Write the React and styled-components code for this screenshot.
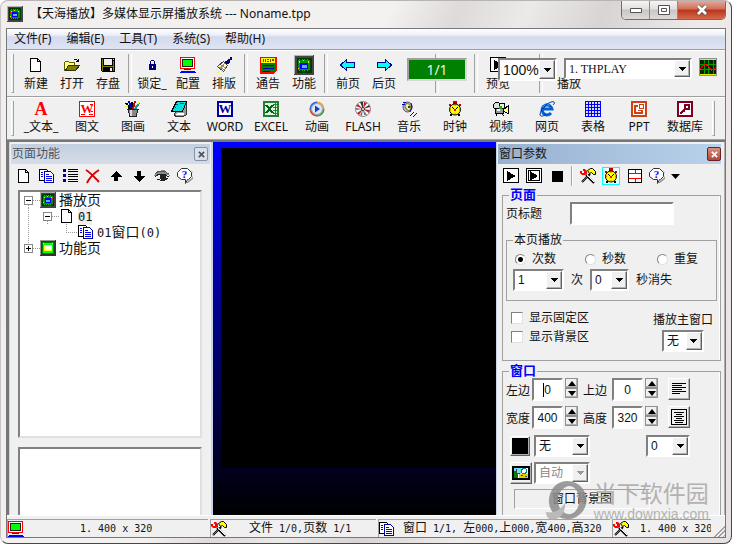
import React from 'react';
import styled, { createGlobalStyle, css } from 'styled-components';

const colors = {
  FACE: '#f0f0f0',
  SHADOW: '#808080',
  SOFT: '#a0a0a0',
  LIGHT: '#ffffff',
  TEXT: '#111111',
  BLUE: '#0000ff',
};

const fonts = {
  UI: '"Noto Sans", "Noto Sans CJK SC", sans-serif',
  DIALOG: '"Liberation Sans", "Noto Sans CJK SC", sans-serif',
  MONO: '"DejaVu Sans Mono", "Noto Sans CJK SC", monospace',
};

const GlobalStyle = createGlobalStyle`
  * { box-sizing: border-box; }
  body {
    margin: 0;
    background: #ffffff;
    color: ${colors.TEXT};
    font: 12px/16px ${fonts.UI};
  }
  button, input, select {
    margin: 0;
    padding: 0;
    border: 0;
    border-radius: 0;
    background: none;
    color: inherit;
    font: inherit;
    outline: none;
  }
`;

const sunken = css`
  border: 2px solid;
  border-color: ${colors.SHADOW} ${colors.LIGHT} ${colors.LIGHT} ${colors.SHADOW};
`;

const raised = css`
  border: 1px solid;
  border-color: ${colors.LIGHT} #606060 #606060 ${colors.LIGHT};
  box-shadow: inset -1px -1px 0 #b0b0b0;
`;

/* ---------- icons ---------- */

const Svg = styled.svg`
  display: block;
  flex: none;
  overflow: visible;
`;

const letter = { fontFamily: 'Liberation Serif, serif', fontWeight: 'bold', textAnchor: 'middle' };

const glyphs = {
  chip: (
    <>
      <path fill="#444" d="M0 0h16v16H0z" />
      <path fill="#b4b4b4" d="M0 0h15v1H1v14H0z" />
      <path fill="#003800" d="M2 2h12v12H2z" />
      <path fill="#009800" d="M3 4h10v8H3z" />
      <path fill="#00d000" d="M4 3h1v1H4zM6 3h1v1H6zM8 3h1v1H8zM10 3h1v1h-1zM4 12h1v1H4zM6 12h1v1H6zM8 12h1v1H8zM10 12h1v1h-1z" />
      <path fill="#0000ff" d="M5 6h6v5H5z" />
      <path fill="#ffe000" d="M4 5h1v1H4zM7 4h1v1H7zM11 5h1v1h-1zM3 10h1v1H3z" />
      <path fill="#ff2000" d="M3 6h1v1H3zM12 6h1v1h-1z" />
      <path fill="#60b0ff" d="M6 8h4v2H6z" />
    </>
  ),
  chipGreen: (
    <>
      <path fill="#333" d="M0 0h16v16H0z" />
      <path fill="#999" d="M0 0h15v1H1v14H0z" />
      <path fill="#008000" d="M2 2h12v12H2z" />
      <path fill="#00ff00" d="M3 3h10v10H3z" />
      <path fill="#ffff00" d="M3 3h1v1H3zM12 3h1v1h-1zM4 5h8v6H4z" />
      <path fill="#fff" d="M5 6h6v4H5z" />
    </>
  ),
  page: (
    <>
      <path fill="#fff" d="M3 2h7l3 3v9H3z" />
      <path fill="none" stroke="#000" d="M2.500 1.500h7l3 3v10h-10zM9.500 1.500v3h3" />
    </>
  ),
  open: (
    <>
      <path fill="#ffff80" d="M1 6l1-1h3l1 1h5v3H5l-3 5H1z" />
      <path fill="none" stroke="#606000" d="M.5 13.500v-8l1-1h3l1 1h5v3" />
      <path fill="#808000" stroke="#303000" d="M1.500 13.500l3-5h11l-4 5z" />
      <path fill="none" stroke="#000" d="M9.500 3.500l1-1h2l2 2M14.500 1.500v3h-3" />
    </>
  ),
  save: (
    <>
      <path fill="#000" d="M1 1h14v14H2l-1-1z" />
      <path fill="#808000" d="M2 2h1v12H2zM13 4h1v10h-1zM3 9h10v1H3z" />
      <path fill="#eee" d="M4 2h8v6H4zM13 2h1v1h-1zM10 11h2v3h-2z" />
    </>
  ),
  lock: (
    <>
      <path fill="none" stroke="#000080" d="M6.500 7.500v-3l1-1h2l1 1v3" />
      <path fill="#000080" d="M5 7h7v6H5z" />
      <path fill="#fff" d="M8 9h1v2H8z" />
    </>
  ),
  monitor: (
    <>
      <path fill="#fff" stroke="#ff0000" d="M.5.5h14v11H.5z" />
      <path fill="#222" d="M2 2h11v8H2z" />
      <path fill="#00ff00" d="M3 3h9v6H3z" />
      <path fill="#0000ff" d="M4 12h7v1H4zM1 14h14v1H1zM0 15h16v1H0z" />
    </>
  ),
  brush: (
    <>
      <path fill="#fff8c0" stroke="#444" d="M1.500 9.500l6-5 4 4-4 6z" />
      <path stroke="#888" d="M3 10l6 3M5 8l5 3M4 12l5-6" />
      <path fill="#ffff00" d="M0 12h2v1H0zM2 14h2v1H2zM1 15h2v1H1zM5 13h1v2H5z" />
      <path fill="#000080" d="M9 4h2l1-2h2V0h2v3h-2v2l-2 2h-2z" />
    </>
  ),
  memo: (
    <>
      <path fill="#f00" d="M0 0h17v14l-4 3H0z" />
      <path fill="#008000" d="M1 6h14v8l-3 1H1z" />
      <path fill="#ff0" d="M1 1h14v5H1z" />
      <path fill="#804000" d="M3 2h1v3H3zM5 2h1v3H5zM7 2h2v1H7zM7 4h2v1H7zM10 2h1v3h-1zM12 2h2v2h-2z" />
      <path fill="#0000c0" d="M3 8h11v1H3zM3 11h11v1H3zM3 14h7v1H3z" />
    </>
  ),
  back: <path fill="#00ffff" stroke="#000090" d="M.5 8L6.500 2.500v3h8v5h-8v3z" />,
  forward: <path fill="#00ffff" stroke="#000090" d="M15.500 8L9.500 2.500v3h-8v5h8v3z" />,
  play: (
    <>
      <path fill="#fff" stroke="#000" d="M.5.5h15v14H.5z" />
      <path fill="#000" d="M4 3l9 5-9 5z" />
    </>
  ),
  playDouble: (
    <>
      <path fill="#fff" stroke="#000" d="M.5.5h15v14H.5zM2.500 2.500h11v10h-11z" />
      <path fill="#000" d="M4 3l8 5-8 5z" />
    </>
  ),
  stop: <path fill="#000" d="M3 3h11v11H3z" />,
  scope: (
    <>
      <path fill="#909090" d="M0 0h16v16H0z" />
      <path fill="#002800" d="M1 1h14v14H1z" />
      <path fill="#e8e800" d="M1 1h14v1H1zM1 14h14v1H1z" />
      <path stroke="#00a000" d="M4.500 2v12M8.500 2v12M12.500 2v12M1 5.500h14M1 10.500h14" />
      <path fill="none" stroke="#ff0000" d="M1 10l2-3 2-2 3 2 3 4 2-1 2-2" />
    </>
  ),
  letterA: <text x="8" y="14" fontSize="18" fill="#f00" {...letter}>A</text>,
  wordRed: (
    <>
      <path fill="#fff" stroke="#f00" d="M.5.5h15v15H.5z" />
      <path stroke="#f00" d="M11 3.500h3M12 10.500h2M10 13.500h4M2 13.500h4" />
      <text x="8" y="12" fontSize="13" fill="#f00" {...letter}>W</text>
    </>
  ),
  paint: (
    <>
      <path fill="#888" stroke="#222" d="M3.500 8.500h9l-1 7h-7z" />
      <path fill="#ddd" d="M5 9h2v6H5z" />
      <path stroke="#000" strokeWidth="2" d="M1 2l4 6M7 1v7" />
      <path stroke="#d00000" strokeWidth="2" d="M10 0L8 8" />
      <path stroke="#0000d0" strokeWidth="2" d="M4 0l2 7" />
      <path stroke="#00a0a0" strokeWidth="2" d="M14 2l-4 6" />
      <path fill="#ff0" d="M12 1h2v2h-2zM1 4h2v2H1z" />
      <path stroke="#222" d="M2 8.500h12" />
    </>
  ),
  notebook: (
    <>
      <path fill="#999" stroke="#333" d="M6.500 3.500l9-2v12l-3 2h-8l-1-2z" />
      <path fill="#fff" d="M6 12h7v2H5z" />
      <path fill="#00e0e0" stroke="#000" d="M5.500.5h10l-4 10H.5z" />
      <path stroke="#006070" d="M5 3.500h2M4 6.500h1M9 2.500h4" />
    </>
  ),
  wordBlue: (
    <>
      <path fill="#0000a0" d="M0 0h16v16H0z" />
      <path fill="#fff" d="M2 2h12v12H2z" />
      <text x="8" y="12" fontSize="13" fill="#0000a0" {...letter}>W</text>
    </>
  ),
  excel: (
    <>
      <path fill="#dff0df" stroke="#208030" strokeWidth="2" d="M1 1h14v14H1z" />
      <path stroke="#208030" d="M10 3.500h4M10 6.500h4M10 9.500h4M10 12.500h4M12.500 2v12" />
      <path stroke="#006020" strokeWidth="2" d="M3 4l7 8M10 4l-7 8" />
    </>
  ),
  media: (
    <>
      <circle cx="8" cy="8" r="7.500" fill="#f2a030" />
      <path fill="#3070e0" d="M8 .5A7.500 7.500 0 0 0 .5 8H8z" />
      <path fill="#40a040" d="M8 15.500A7.500 7.500 0 0 0 15.500 8H8z" />
      <path fill="#d05030" d="M.5 8A7.500 7.500 0 0 0 8 15.500V8z" />
      <circle cx="8" cy="8" r="5.500" fill="#dce8fa" stroke="#9ab" />
      <path fill="#1040c0" d="M6 4.500l5 3.500-5 3.500z" />
    </>
  ),
  flash: (
    <>
      <circle cx="8" cy="8" r="7.500" fill="#fff" stroke="#888" />
      <path fill="#333" d="M8 8L5 1h3zM8 8l6-4 1 2z" />
      <path fill="#c02030" d="M8 8L9 1l3 1zM8 8l7 1-1 3zM8 8L1 5l2-2zM8 8l-6 4 2 2z" />
      <path fill="#777" d="M8 8l4 6H9zM8 8l-1 7-2-1zM8 8L1 9V7z" />
      <circle cx="8" cy="8" r="1.500" fill="#fff" stroke="#333" />
    </>
  ),
  music: (
    <>
      <ellipse cx="6.500" cy="6" rx="4.500" ry="5" fill="#b8b8c0" stroke="#55556a" />
      <ellipse cx="7" cy="6" rx="2.500" ry="3.500" fill="#e8e8d8" stroke="#808000" transform="rotate(-25 7 6)" />
      <path stroke="#0000c0" fill="none" d="M1 3.500h3M2 1.500h3M10 2l1 4-2 5" />
      <path fill="#404000" d="M7 5h2v2H7z" />
      <path stroke="#0000d0" d="M9 15l4-4M12 16l4-4" />
    </>
  ),
  clock: (
    <>
      <path fill="#c00000" d="M6 0h4v3H6zM2 3h2v2H2zM12 3h2v2h-2z" />
      <circle cx="8" cy="8.500" r="5.500" fill="#ffff00" stroke="#000" />
      <path stroke="#c08000" d="M8 4v1M8 12v1M3 8.500h1M12 8.500h1" />
      <path fill="none" stroke="#000" d="M5 6l3 3 3-3" />
      <path fill="#f00" d="M7 8h2v2H7z" />
      <path fill="#000" d="M3 13h2v2H3zM11 13h2v2h-2z" />
    </>
  ),
  video: (
    <>
      <circle cx="4" cy="5" r="3.500" fill="#ddd" stroke="#000" />
      <circle cx="9" cy="5" r="3" fill="#eee" stroke="#000" />
      <path fill="#999" stroke="#000" d="M2.500 7.500h8v5h-8z" />
      <path fill="#00c000" d="M6 5h3v3H6z" />
      <path fill="#fff" d="M4 8h3v2H4z" />
      <path fill="#ffff80" stroke="#000" d="M10.500 8.500l5-4v8l-5-2z" />
      <path stroke="#000" d="M4 13l-1 2M9 13l2 2" />
    </>
  ),
  browser: (
    <>
      <path fill="none" stroke="#0060d8" strokeWidth="3" d="M4 8h9a5 5 0 1 0-1 4" />
      <path fill="none" stroke="#30c0f0" d="M4 6.500a4.500 4.500 0 0 1 6-2.500" />
      <path fill="none" stroke="#0030a0" d="M15 1c-3-2-14 6-14 13 1 2 4 1 6-1M15 1c1 1 0 2-1 3" />
    </>
  ),
  grid: (
    <>
      <path fill="#d8dcff" d="M0 0h16v16H0z" />
      <path stroke="#0000ff" d="M.5 0v16M3.500 0v16M6.500 0v16M9.500 0v16M12.500 0v16M15.500 0v16M0 .5h16M0 3.500h16M0 6.500h16M0 9.500h16M0 12.500h16M0 15.500h16" />
    </>
  ),
  ppt: (
    <>
      <path fill="#fff" stroke="#d04010" strokeWidth="2" d="M1 1h14v14H1z" />
      <path fill="none" stroke="#d04010" strokeWidth="2" d="M7 5H4v7h7V9" />
      <path fill="none" stroke="#d04010" d="M8.500 3.500h4v4h-4zM7 9.500h3" />
    </>
  ),
  key: (
    <>
      <path fill="#fff" stroke="#800020" strokeWidth="2" d="M1 1h14v14H1z" />
      <circle cx="10" cy="6" r="2.500" fill="#fff" stroke="#800020" strokeWidth="2" />
      <path stroke="#800020" strokeWidth="2" d="M8 8l-5 5" />
      <path stroke="#800020" d="M5 10.500h3M11 3l1 3" />
    </>
  ),
  copy: (
    <>
      <path fill="#fff" stroke="#000" d="M.5 1.500h7l2 2v9h-9z" />
      <path stroke="#00f" d="M2 4.500h2M2 6.500h2M2 8.500h2" />
      <path fill="#fff" stroke="#0000a0" d="M5.500 3.500h6l3 3v8h-9z" />
      <path stroke="#00f" d="M7 6.500h3M7 8.500h6M7 10.500h6M7 12.500h6" />
    </>
  ),
  list: (
    <>
      <path fill="#0000a0" d="M1 1h3v3H1zM1 6h3v3H1zM1 11h3v3H1z" />
      <path stroke="#000" d="M6 1.500h10M6 3.500h10M6 6.500h10M6 8.500h10M6 11.500h10M6 13.500h10" />
    </>
  ),
  remove: <path fill="none" stroke="#d80000" strokeWidth="2" d="M1 2c5 3 9 8 13 12M14 2C9 5 5 9 2 15" />,
  up: <path fill="#000" d="M8 3l6 6h-4v4H6V9H2z" />,
  down: <path fill="#000" d="M8 14l6-6h-4V3H6v5H2z" />,
  eye: (
    <>
      <path fill="#8c8c8c" d="M0 8l4-5 6-1 5 4 1 2-3-1-3-1H6L3 8z" />
      <path fill="none" stroke="#222" d="M1 9l4-3h5l5 3M3 11l3 1h5l3-2" />
      <circle cx="9" cy="9" r="3" fill="#222" />
      <path stroke="#555" d="M1 6l4-3h5l5 3" fill="none" />
    </>
  ),
  help: (
    <>
      <path fill="#999" d="M9 15l3-3c5-2 5-7 2-10l2 4v5l-5 4z" />
      <path fill="#fff" stroke="#333" d="M4.500.5h6l4 4v4l-3 3h-1l-2 4v-4h-4l-4-3v-4z" />
      <text x="7.500" y="10" fontSize="11" fill="#00f" {...letter}>?</text>
    </>
  ),
  tools: (
    <>
      <path stroke="#000" strokeWidth="2" d="M6 7l8 8M10 6L2 14" />
      <path stroke="#fff" d="M7 7l7 7" />
      <path stroke="#00b000" d="M9 7l-7 7" />
      <path fill="#ff0000" d="M0 3h2v2h2V3H3V1h2l2 2v3L5 7H2L0 5z" />
      <path fill="#ffff00" stroke="#000" d="M7.500 2.500l3-2h2l3 3v3h-2l-2-2-2 1z" />
    </>
  ),
  wall: (
    <>
      <path fill="#fff" d="M2 1h14v14H2z" />
      <path fill="none" stroke="#f00" d="M3 5.500h12M3 10.500h12M9.500 1v4M9.500 11v4" />
      <path fill="none" stroke="#000" d="M2.500 1.500h13v13h-13z" />
    </>
  ),
  picture: (
    <>
      <path fill="#fff" stroke="#000" strokeWidth="2" d="M0 2h16v12H0z" />
      <path fill="#70e0f0" d="M1 3h7v6H1z" />
      <circle cx="11" cy="6" r="2.500" fill="#fff" stroke="#088" />
      <path fill="#008000" d="M1 6h2v2h2v5H1z" />
      <path fill="#e0d000" d="M6 9h9v4H6z" />
      <path fill="#444" d="M3 4h1v4H3zM5 8h2v1H5zM8 10h2v1H8zM12 11h2v1h-2z" />
    </>
  ),
  alignLeft: <path stroke="#000" d="M1 2.500h14M1 4.500h10M1 6.500h14M1 8.500h10M1 10.500h14M1 12.500h8" />,
  alignBox: <path fill="none" stroke="#000" d="M.5.5h15v15H.5zM3 3.500h10M5 5.500h6M3 7.500h10M5 9.500h6M3 11.500h10M4 13.500h8" />,
};

const SMOOTH = ['media', 'flash', 'clock', 'music', 'browser', 'remove', 'help', 'letterA', 'tools'];

function Icon({ name, size = 16 }) {
  return (
    <Svg
      width={size}
      height={size}
      viewBox="0 0 16 16"
      shapeRendering={SMOOTH.includes(name) ? 'auto' : 'crispEdges'}
      aria-hidden="true"
    >
      {glyphs[name]}
    </Svg>
  );
}

/* ---------- window frame ---------- */

const Window = styled.main`
  position: relative;
  display: flex;
  flex-direction: column;
  height: 100vh;
  min-height: 480px;
  padding: 0 5px 5px;
  overflow: hidden;
  border: 1px solid #4a4648;
  border-left-color: #c8c4c4;
  border-top-color: #b8b4b4;
  border-radius: 8px;
  background: linear-gradient(115deg, #f1eeee 0, #f4f1f1 40%, #dedada 47%, #ece9e9 54%, #d8d4d4 62%, #eeeaea 72%, #e6e2e2 100%);
`;

const TitleBar = styled.header`
  display: flex;
  align-items: flex-start;
  height: 27px;
  flex: none;
`;

const Title = styled.h1`
  display: flex;
  flex: 1;
  align-items: center;
  gap: 7px;
  height: 26px;
  margin: 0;
  padding-left: 1px;
  font-size: 12px;
  font-weight: normal;
  white-space: nowrap;
`;

const Caption = styled.div`
  display: flex;
  overflow: hidden;
  border: 1px solid #6f6c6c;
  border-top: 0;
  border-radius: 0 0 5px 5px;
`;

const CaptionButton = styled.button`
  display: flex;
  align-items: center;
  justify-content: center;
  width: ${({ $close }) => ($close ? 47 : 28)}px;
  height: 18px;
  border-right: ${({ $close }) => ($close ? 0 : '1px solid #8c8888')};
  background: ${({ $close }) => ($close
    ? 'linear-gradient(#e3a89a, #cf6e58 45%, #b8341a 50%, #d4694c)'
    : 'linear-gradient(#f6f4f4, #e2dfdf 45%, #c9c5c5 50%, #dedada)')};
`;

const Client = styled.div`
  display: flex;
  flex: 1;
  flex-direction: column;
  min-height: 0;
  border: 1px solid #77777a;
  background: ${colors.FACE};
`;

const MenuBar = styled.nav`
  display: flex;
  flex: none;
  align-items: center;
  gap: 15px;
  height: 21px;
  padding-left: 7px;
  border-bottom: 1px solid #9c9ca0;
  background: linear-gradient(#ffffff, #eceff8 30%, #d3daed 40%, #dfe4f2);

  a {
    color: inherit;
    text-decoration: none;
  }
`;

const ToolRow = styled.div`
  display: flex;
  flex: none;
  height: ${({ $height }) => $height}px;
  overflow: hidden;
  border-top: 1px solid #ffffff;
  border-bottom: 1px solid ${colors.SOFT};
`;

const Grip = styled.span`
  flex: none;
  width: 3px;
  margin: 3px 4px;
  border-right: 1px solid ${colors.SOFT};
  border-bottom: 1px solid ${colors.SOFT};
  border-left: 1px solid #ffffff;
`;

const Divider = styled.span`
  flex: none;
  width: 8px;
  padding: 3px 0;

  &::before {
    content: '';
    display: block;
    width: 2px;
    height: 100%;
    margin: 0 auto;
    border-left: 1px solid ${colors.SOFT};
    border-right: 1px solid #ffffff;
  }
`;

const ToolButton = styled.button`
  display: flex;
  flex: none;
  flex-direction: column;
  align-items: center;
  gap: ${({ $wide }) => ($wide ? 0 : 1)}px;
  width: ${({ $wide }) => ($wide ? 46 : 36)}px;
  padding-top: ${({ $wide }) => ($wide ? 1 : 4)}px;
  white-space: nowrap;
`;

const IconSlot = styled.span`
  display: flex;
  align-items: center;
  height: 20px;
`;

const Counter = styled.div`
  display: grid;
  flex: none;
  width: 70px;
  justify-items: center;

  > * { grid-area: 1 / 1; }
`;

const CounterValue = styled.output`
  align-self: start;
  width: 60px;
  height: 23px;
  margin-top: 7px;
  border: 2px solid;
  border-color: #a0a0a0 #d8d8d8 #d8d8d8 #a0a0a0;
  background: #008000;
  color: #e8f4e8;
  font-size: 14px;
  line-height: 19px;
  text-align: center;
`;

const PlayArea = styled.div`
  display: grid;
  flex: 1;

  > * { grid-area: 1 / 1; }
`;

const PlayLayer = styled.div`
  display: flex;
`;

const Spacer = styled.span`
  width: ${({ $width }) => $width}px;
  flex: none;
`;

const FieldLayer = styled.div`
  display: flex;
  align-items: flex-start;
  align-self: start;
  gap: 7px;
  padding: 7px 0 0 18px;
`;

const ComboFrame = styled.span`
  ${sunken}
  display: inline-grid;
  flex: none;
  width: ${({ $width }) => $width}px;
  height: ${({ $height }) => $height}px;
  background: #ffffff;
  color: ${({ $disabled }) => ($disabled ? '#888888' : colors.TEXT)};

  > * { grid-area: 1 / 1; }

  select {
    appearance: none;
    width: 100%;
    min-width: 0;
    padding-left: 3px;
    opacity: 1;
    font-family: ${({ $serif }) => ($serif ? '"Liberation Serif", serif' : fonts.DIALOG)};
    font-size: ${({ $size }) => $size}px;
  }
`;

const ComboArrow = styled.span`
  ${raised}
  display: flex;
  align-items: center;
  justify-content: center;
  justify-self: end;
  width: 16px;
  background: ${colors.FACE};
  pointer-events: none;
`;

function Combo({
  label, value, width, height = 22, size = 12, serif, disabled,
}) {
  return (
    <ComboFrame $width={width} $height={height} $size={size} $serif={serif} $disabled={disabled}>
      <select aria-label={label} defaultValue={value} disabled={disabled}>
        <option>{value}</option>
      </select>
      <ComboArrow>
        <Svg width="7" height="4" viewBox="0 0 7 4" shapeRendering="crispEdges">
          <path fill={disabled ? '#999' : '#000'} d="M0 0h7L3.500 4z" />
        </Svg>
      </ComboArrow>
    </ComboFrame>
  );
}

/* ---------- workspace ---------- */

const Workspace = styled.div`
  display: flex;
  flex: 1;
  min-height: 0;
  border-top: 2px solid #77777a;
  border-left: 2px solid #77777a;
  overflow: hidden;
`;

const Panel = styled.section`
  display: flex;
  flex: none;
  flex-direction: column;
  width: ${({ $width }) => $width}px;
  min-height: 0;
  padding: 2px ${({ $side }) => ($side === 'left' ? 1 : 3)}px 0 1px;
  border-right: ${({ $side }) => ($side === 'left' ? '2px solid #c8d4e8' : '1px solid #b0b0b4')};
  border-left: 1px solid #c8d4e8;
`;

const PanelHeader = styled.header`
  display: flex;
  flex: none;
  align-items: center;
  justify-content: space-between;
  height: 20px;
  padding: 0 ${({ $active }) => ($active ? 0 : 2)}px 0 1px;
  background: ${({ $active }) => ($active
    ? 'linear-gradient(90deg, #98b1d0, #b9d1ea)'
    : 'linear-gradient(#c2cfdf, #d5dde7)')};
  color: ${({ $active }) => ($active ? '#101820' : '#4c5460')};

  h2 {
    margin: 0;
    font-size: 12px;
    font-weight: normal;
  }
`;

const PanelClose = styled.button`
  display: flex;
  align-items: center;
  justify-content: center;
  width: 14px;
  height: 14px;
  border: 1px solid ${({ $active }) => ($active ? '#6a2020' : '#8492a6')};
  border-radius: 2px;
  background: ${({ $active }) => ($active ? 'linear-gradient(#d89080, #b04838)' : '#d9e2ec')};
`;

const IconBar = styled.div`
  display: flex;
  flex: none;
  align-items: center;
  height: 24px;
  margin-bottom: ${({ $gap }) => $gap}px;
  padding-left: 1px;

  button {
    display: flex;
    align-items: center;
    justify-content: center;
    width: 23px;
    height: 20px;
  }
`;

const BarDivider = styled.span`
  width: 2px;
  height: 20px;
  margin: 0 3px;
  border-left: 1px solid ${colors.SOFT};
  border-right: 1px solid #ffffff;
`;

const ActiveSwatch = styled.span`
  display: flex;
  outline: 1px solid #00ffff;
  background: #e8ffff;
`;

const Well = styled.div`
  ${sunken}
  border-right-color: #e0e0e0;
  border-bottom-color: #e0e0e0;
  flex: ${({ $grow }) => $grow};
  min-height: 0;
  margin: 0 8px ${({ $last }) => ($last ? 0 : 9)}px 7px;
  border-bottom-width: ${({ $last }) => ($last ? 0 : 2)}px;
  background: #ffffff;
`;

const Tree = styled.ul`
  margin: 0;
  padding: 0 0 0 3px;
  list-style: none;
  font-size: 14px;
`;

const TreeRow = styled.li`
  display: flex;
  align-items: center;
  height: 16px;
  padding-left: ${({ $depth }) => $depth * 19}px;
  white-space: nowrap;
`;

const TreeLabel = styled.span`
  margin-left: 3px;
  background: ${({ $selected }) => ($selected ? '#eeeeee' : 'none')};
  line-height: 16px;
`;

const Latin = styled.span`
  font-family: ${fonts.MONO};
  font-size: ${({ $size = 10 }) => $size}px;
  white-space: pre;
`;

function Branch({ state }) {
  return (
    <Svg width="17" height="16" viewBox="0 0 17 16" shapeRendering="crispEdges">
      <path stroke="#999" strokeDasharray="1 1" d={state === 'leaf' ? 'M5.500 0v8M5 8.500h12' : 'M10 8.500h7'} />
      {state === 'open' && <path stroke="#999" strokeDasharray="1 1" d="M5.500 13v3" />}
      {state !== 'leaf' && <path fill="#fff" stroke="#888" d="M1.500 4.500h8v8h-8z" />}
      {state !== 'leaf' && <path stroke="#000" d="M3 8.500h5" />}
      {state === 'closed' && <path stroke="#000" d="M5.500 6v5" />}
      {state === 'closed' && <path stroke="#999" strokeDasharray="1 1" d="M5.500-32V4" />}
    </Svg>
  );
}

const Canvas = styled.section`
  flex: 1;
  min-width: 0;
  overflow: hidden;
  padding: 6px 0 0 8px;
  background: linear-gradient(#0000ff, #000000);
`;

const Stage = styled.div`
  height: 320px;
  background: #000000;
`;

/* ---------- parameter form ---------- */

const Params = styled.form`
  display: flex;
  flex: 1;
  flex-direction: column;
  gap: 4px;
  min-height: 0;
  padding: 1px 0 0 4px;
  overflow: hidden;
  font-family: ${fonts.DIALOG};
`;

const Group = styled.fieldset`
  flex: none;
  min-width: 0;
  margin: 0;
  padding: ${({ $inner }) => ($inner ? '3px 6px 9px' : '1px 3px 8px')};
  border: 1px solid ${colors.SOFT};
  box-shadow: ${({ $inner }) => ($inner ? 'none' : 'inset -1px 0 0 #ffffff')};

  legend {
    height: 12px;
    margin-left: ${({ $inner }) => ($inner ? 0 : 3)}px;
    padding: 0 1px;
    font-size: ${({ $inner }) => ($inner ? 12 : 13)}px;
    font-weight: ${({ $inner }) => ($inner ? 'normal' : 'bold')};
    color: ${({ $inner }) => ($inner ? colors.TEXT : colors.BLUE)};
    line-height: 12px;
  }
`;

const TitleField = styled.label`
  display: flex;
  align-items: center;
  gap: 28px;
  margin-bottom: 9px;

  input {
    ${sunken}
    width: 104px;
    height: 23px;
    background: #ffffff;
  }
`;

const Line = styled.div`
  display: flex;
  align-items: center;
  gap: ${({ $gap = 7 }) => $gap}px;
  height: 22px;
  white-space: nowrap;
`;

const RadioLine = styled.div`
  display: grid;
  grid-template-columns: 70px 72px 1fr;
  height: 20px;
  padding-left: 2px;
  align-items: center;
`;

const Choice = styled.label`
  display: flex;
  align-items: center;
  gap: 6px;
  height: 19px;
  white-space: nowrap;

  input {
    appearance: none;
    flex: none;
    width: 12px;
    height: 12px;
    border: 1px solid;
    border-color: ${colors.SHADOW} #e0e0e0 #e0e0e0 ${colors.SHADOW};
    background: #ffffff;
  }

  input[type='radio'] {
    width: 11px;
    height: 11px;
    border-radius: 50%;
  }

  input[type='radio']:checked {
    background: radial-gradient(#000000 2px, #ffffff 3px);
  }
`;

const Display = styled.div`
  display: flex;
  justify-content: space-between;
  padding: 7px 4px 0 5px;
`;

const MainWindow = styled.label`
  display: flex;
  flex-direction: column;
  align-items: center;
  gap: 2px;
  padding-top: 4px;
`;

const Bounds = styled.div`
  display: grid;
  grid-template-columns: 26px 46px 5px 29px 46px 10px 22px;
  row-gap: 5px;
  align-items: start;

  label { padding-top: 5px; }
  > :nth-child(5n) { grid-column: 7; }
  > :nth-child(5n + 3) { grid-column: 4; }
`;

const NumberBox = styled.span`
  display: flex;
  align-items: flex-start;
  gap: 2px;

  input {
    ${sunken}
    width: 31px;
    height: 23px;
    background: ${({ $caret }) => ($caret
    ? 'linear-gradient(#000, #000) 9px 3px / 1px 14px no-repeat, #ffffff'
    : '#ffffff')};
    text-align: center;
  }
`;

const Spin = styled.span`
  display: flex;
  flex-direction: column;

  button {
    ${raised}
    display: flex;
    align-items: center;
    justify-content: center;
    width: 13px;
    height: 10px;
    border-color: #909090;
  }
`;

const SquareButton = styled.button`
  ${raised}
  display: flex;
  flex: none;
  align-items: center;
  justify-content: center;
  width: ${({ $size = 22 }) => $size}px;
  height: ${({ $size = 22 }) => $size}px;
`;

const Swatch = styled.span`
  width: 16px;
  height: 16px;
  background: #000000;
`;

const Extras = styled.div`
  display: flex;
  flex-direction: column;
  gap: 5px;
  padding: 6px 0 0 4px;
`;

const BackgroundButton = styled.button`
  width: 136px;
  height: 20px;
  margin-left: 4px;
  border: 1px solid ${colors.SOFT};
  border-right-color: #ffffff;
  border-bottom-color: #ffffff;
`;

/* floats over the panel and the edge of the status bar */
const Watermark = styled.div`
  position: absolute;
  right: 22px;
  bottom: 20px;
  display: flex;
  align-items: center;
  gap: 6px;
  color: #a8a8a8;
  opacity: 0.85;
  pointer-events: none;

  p {
    margin: 0;
    font-size: 23px;
    line-height: 26px;
    white-space: nowrap;
  }

  small {
    display: block;
    font-family: ${fonts.DIALOG};
    font-size: 14px;
    line-height: 16px;
  }
`;

function NumberField({
  id, label, value, caret,
}) {
  return (
    <>
      <label htmlFor={id}>{label}</label>
      <NumberBox $caret={caret}>
        <input id={id} defaultValue={value} />
        <Spin>
          <button type="button" aria-label={`${label} +`}>
            <Svg width="8" height="5" viewBox="0 0 8 5"><path d="M0 5h8L4 0z" /></Svg>
          </button>
          <button type="button" aria-label={`${label} -`}>
            <Svg width="8" height="5" viewBox="0 0 8 5"><path d="M0 0h8L4 5z" /></Svg>
          </button>
        </Spin>
      </NumberBox>
    </>
  );
}

/* ---------- status bar ---------- */

const StatusBar = styled.footer`
  display: flex;
  flex: none;
  gap: 2px;
  height: 22px;
  padding-top: 3px;
  border-top: 1px solid #ffffff;
  background: ${colors.FACE};
`;

const StatusCell = styled.div`
  display: flex;
  flex: ${({ $width }) => ($width ? `0 1 ${$width}px` : '1 1 0')};
  align-items: center;
  gap: ${({ $gap }) => $gap}px;
  min-width: 0;
  overflow: hidden;
  border-top: 1px solid ${colors.SOFT};
  border-left: 1px solid ${colors.SOFT};
  font-family: ${fonts.DIALOG};
  white-space: nowrap;
`;

const ResizeGrip = styled.span`
  align-self: flex-end;
  flex: none;
  width: 12px;
  height: 12px;
  background: repeating-linear-gradient(135deg, #a0a0a0 0 1px, #f0f0f0 1px 3px);
  clip-path: polygon(100% 0, 100% 100%, 0 100%);
`;

const menus = ['文件(F)', '编辑(E)', '工具(T)', '系统(S)', '帮助(H)'];

const mainTools = [
  ['page', '新建'], ['open', '打开'], ['save', '存盘'], null,
  ['lock', '锁定_'], ['monitor', '配置'], ['brush', '排版'], null,
  ['memo', '通告'], ['chip', '功能', 20], null,
  ['back', '前页'], ['forward', '后页'],
];

const insertTools = [
  ['letterA', '_文本_'], ['wordRed', '图文'], ['paint', '图画'], ['notebook', '文本'],
  ['wordBlue', 'WORD'], ['excel', 'EXCEL'], ['media', '动画'], ['flash', 'FLASH'],
  ['music', '音乐'], ['clock', '时钟'], ['video', '视频'], ['browser', '网页'],
  ['grid', '表格'], ['ppt', 'PPT'], ['key', '数据库'],
];

const pageTools = [
  ['page', '新页'], ['copy', '复制'], ['list', '列表'], ['remove', '删除'],
  ['up', '上移'], ['down', '下移'], ['eye', '查看'], ['help', '帮助'],
];

function Tool({
  name, label, size, wide,
}) {
  return (
    <ToolButton type="button" $wide={wide}>
      <IconSlot>{name && <Icon name={name} size={size} />}</IconSlot>
      <span>{label}</span>
    </ToolButton>
  );
}

function CloseMark({ color }) {
  return (
    <Svg width="7" height="7" viewBox="0 0 8 8">
      <path stroke={color} strokeWidth="2" d="M1 1l6 6M7 1L1 7" />
    </Svg>
  );
}

function PagePanel() {
  return (
    <Panel $width={204} $side="left">
      <PanelHeader>
        <h2>页面功能</h2>
        <PanelClose type="button" aria-label="关闭"><CloseMark color="#4c5460" /></PanelClose>
      </PanelHeader>
      <IconBar $gap={2}>
        {pageTools.map(([name, label]) => (
          <button type="button" key={name} aria-label={label}><Icon name={name} /></button>
        ))}
      </IconBar>
      <Well $grow="247 1 0">
        <Tree>
          <TreeRow $depth={0}>
            <Branch state="open" />
            <Icon name="chip" />
            <TreeLabel>播放页</TreeLabel>
          </TreeRow>
          <TreeRow $depth={1}>
            <Branch state="open" />
            <Icon name="page" />
            <TreeLabel $selected><Latin $size={12}>01</Latin></TreeLabel>
          </TreeRow>
          <TreeRow $depth={2}>
            <Branch state="leaf" />
            <Icon name="copy" />
            <TreeLabel>
              <Latin $size={12}>01</Latin>
              窗口
              <Latin $size={12}>(0)</Latin>
            </TreeLabel>
          </TreeRow>
          <TreeRow $depth={0}>
            <Branch state="closed" />
            <Icon name="chipGreen" />
            <TreeLabel>功能页</TreeLabel>
          </TreeRow>
        </Tree>
      </Well>
      <Well $grow="67 1 0" $last />
    </Panel>
  );
}

function ParamPanel() {
  return (
    <Panel $width={229} $side="right">
      <PanelHeader $active>
        <h2>窗口参数</h2>
        <PanelClose type="button" aria-label="关闭" $active><CloseMark color="#fff" /></PanelClose>
      </PanelHeader>
      <IconBar $gap={0}>
        <button type="button" aria-label="播放"><Icon name="play" /></button>
        <button type="button" aria-label="窗口播放"><Icon name="playDouble" /></button>
        <button type="button" aria-label="停止"><Icon name="stop" /></button>
        <BarDivider />
        <button type="button" aria-label="设置"><Icon name="tools" /></button>
        <button type="button" aria-label="定时"><ActiveSwatch><Icon name="clock" /></ActiveSwatch></button>
        <button type="button" aria-label="分区"><Icon name="wall" /></button>
        <button type="button" aria-label="帮助"><Icon name="help" /></button>
        <Spacer $width={3} />
        <Svg width="9" height="5" viewBox="0 0 9 5"><path d="M0 0h9L4.500 5z" /></Svg>
      </IconBar>
      <Params>
        <Group>
          <legend>页面</legend>
          <TitleField>
            页标题
            <input type="text" />
          </TitleField>
          <Group $inner>
            <legend>本页播放</legend>
            <RadioLine>
              <Choice>
                <input type="radio" name="mode" defaultChecked />
                次数
              </Choice>
              <Choice>
                <input type="radio" name="mode" />
                秒数
              </Choice>
              <Choice>
                <input type="radio" name="mode" />
                重复
              </Choice>
            </RadioLine>
            <Line>
              <Combo label="次数" value="1" width={51} />
              <span>次</span>
              <Combo label="秒数" value="0" width={39} />
              <span>秒消失</span>
            </Line>
          </Group>
          <Display>
            <div>
              <Choice>
                <input type="checkbox" />
                显示固定区
              </Choice>
              <Choice>
                <input type="checkbox" />
                显示背景区
              </Choice>
            </div>
            <MainWindow>
              播放主窗口
              <Combo value="无" width={42} />
            </MainWindow>
          </Display>
        </Group>
        <Group>
          <legend>窗口</legend>
          <Bounds>
            <NumberField id="left" label="左边" value="0" caret />
            <NumberField id="top" label="上边" value="0" />
            <SquareButton type="button" aria-label="左对齐"><Icon name="alignLeft" /></SquareButton>
            <NumberField id="width" label="宽度" value="400" />
            <NumberField id="height" label="高度" value="320" />
            <SquareButton type="button" aria-label="居中"><Icon name="alignBox" /></SquareButton>
          </Bounds>
          <Extras>
            <Line $gap={4}>
              <SquareButton type="button" aria-label="颜色" $size={20}><Swatch /></SquareButton>
              <Combo label="边框" value="无" width={56} />
              <Spacer $width={48} />
              <Combo label="边框宽度" value="0" width={44} />
            </Line>
            <Line $gap={2}>
              <SquareButton type="button" aria-label="图片"><Icon name="picture" /></SquareButton>
              <Combo label="图片方式" value="自动" width={56} disabled />
            </Line>
            <BackgroundButton type="button">窗口背景图</BackgroundButton>
          </Extras>
        </Group>
      </Params>
    </Panel>
  );
}

export default function App() {
  return (
    <>
      <GlobalStyle />
      <Window>
        <TitleBar>
          <Title>
            <Icon name="chip" />
            <span>【天海播放】多媒体显示屏播放系统 --- Noname.tpp</span>
          </Title>
          <Caption>
            <CaptionButton type="button" aria-label="最小化">
              <Svg width="12" height="5" viewBox="0 0 12 5"><path fill="#fff" stroke="#555" d="M.5.5h11v4H.5z" /></Svg>
            </CaptionButton>
            <CaptionButton type="button" aria-label="最大化">
              <Svg width="12" height="10" viewBox="0 0 12 10"><path fill="#fff" stroke="#555" d="M.5.5h11v9H.5zM3.500 3.500h5v3h-5z" /></Svg>
            </CaptionButton>
            <CaptionButton type="button" aria-label="关闭" $close>
              <Svg width="12" height="10" viewBox="0 0 12 10">
                <path stroke="#555" strokeWidth="4" d="M2 1l8 8M10 1L2 9" />
                <path stroke="#fff" strokeWidth="2.500" d="M2 1l8 8M10 1L2 9" />
              </Svg>
            </CaptionButton>
          </Caption>
        </TitleBar>
        <Client>
          <MenuBar>
            {menus.map((menu) => <a href="#menu" key={menu}>{menu}</a>)}
          </MenuBar>
          <ToolRow $height={47}>
            <Grip />
            {mainTools.map((tool, index) => (tool
              ? <Tool key={tool[1]} name={tool[0]} label={tool[1]} size={tool[2]} />
              : <Divider key={`divider-${String(index)}`} />))}
            <Counter>
              <Divider />
              <CounterValue>1/1</CounterValue>
            </Counter>
            <Divider />
            <PlayArea>
              <PlayLayer>
                <Tool name="play" label="预览" />
                <Spacer $width={21} />
                <Divider />
                <Spacer $width={6} />
                <Tool label="播放" />
              </PlayLayer>
              <FieldLayer>
                <Combo label="显示比例" value="100%" width={59} height={23} size={14} />
                <Combo label="播放屏" value="1. THPLAY" width={128} height={21} serif />
                <button type="button" aria-label="波形"><Icon name="scope" size={18} /></button>
              </FieldLayer>
            </PlayArea>
          </ToolRow>
          <ToolRow $height={43}>
            <Grip />
            {insertTools.map(([name, label]) => (
              <Tool key={label} name={name} label={label} wide />
            ))}
            <Grip />
          </ToolRow>
          <Workspace>
            <PagePanel />
            <Canvas><Stage /></Canvas>
            <ParamPanel />
          </Workspace>
          <StatusBar>
            <StatusCell $width={201} $gap={56}>
              <Icon name="monitor" />
              <Latin>1. 400 x 320</Latin>
            </StatusCell>
            <StatusCell $width={166} $gap={22}>
              <Icon name="tools" />
              <span>
                文件
                <Latin> 1/0,</Latin>
                页数
                <Latin> 1/1</Latin>
              </span>
            </StatusCell>
            <StatusCell $width={232} $gap={8}>
              <Icon name="copy" />
              <span>
                窗口
                <Latin> 1/1, </Latin>
                左
                <Latin>000,</Latin>
                上
                <Latin>000,</Latin>
                宽
                <Latin>400,</Latin>
                高
                <Latin>320</Latin>
              </span>
            </StatusCell>
            <StatusCell $gap={11}>
              <Icon name="tools" />
              <Latin>1. 400 x 320</Latin>
            </StatusCell>
            <ResizeGrip />
          </StatusBar>
        </Client>
        <Watermark>
          <Svg width="44" height="44" viewBox="0 0 44 44">
            <path fill="#8c8c8c" fillRule="evenodd" d="M23 2a19 19 0 1 1-8 36C6 34 3 24 6 15 9 7 15 2 23 2zM25 7c-7 1-12 9-11 16 1 8 7 13 13 12 6-2 9-9 8-16-1-8-5-12-10-12z" />
            <path fill="#b0b0b0" d="M2 33c9 2 15-3 19-9 1 8-4 16-13 17-4-1-6-4-6-8z" />
          </Svg>
          <p>
            当下软件园
            <small>www.downxia.com</small>
          </p>
        </Watermark>
      </Window>
    </>
  );
}
